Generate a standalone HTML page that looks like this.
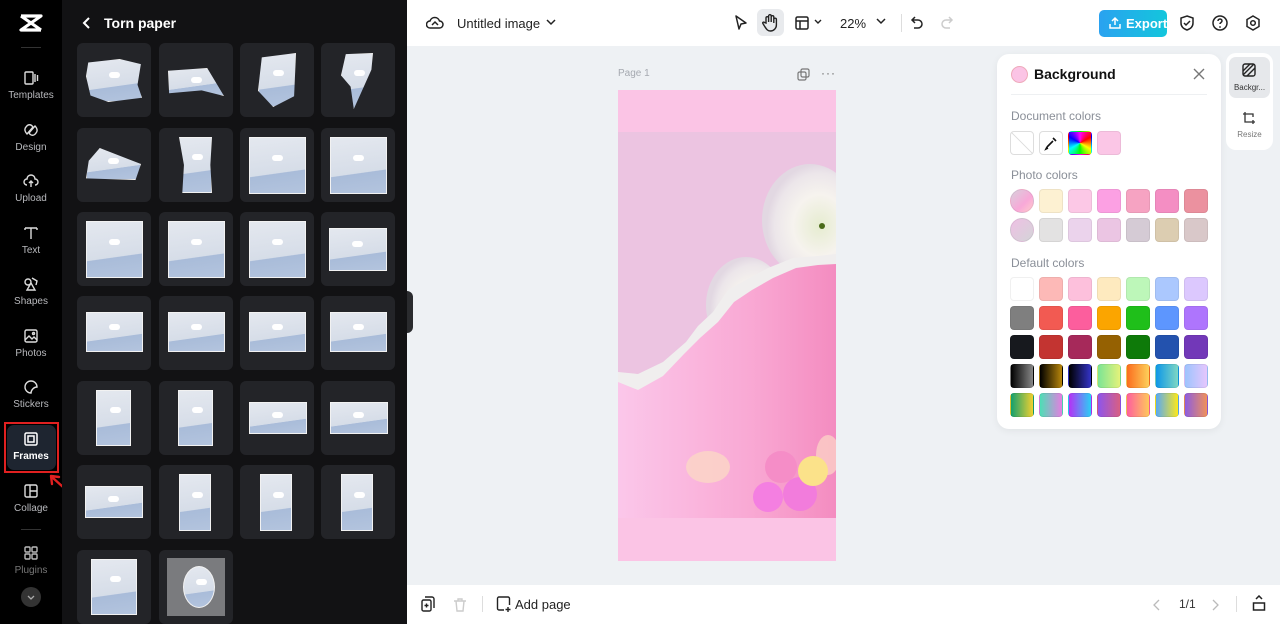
<!DOCTYPE html>
<html><head><meta charset="utf-8"><style>
*{box-sizing:border-box;margin:0;padding:0}
body{width:1280px;height:624px;overflow:hidden;position:relative;font-family:"Liberation Sans",sans-serif;background:#eef1f4}
.a{position:absolute}
#side{left:0;top:0;width:62px;height:624px;background:#000}
.si{position:absolute;left:0;width:62px;text-align:center;color:#b8b9bd;font-size:10px}
.si svg{display:block;margin:0 auto 4px}
#panel{left:62px;top:0;width:345px;height:624px;background:#121214}
.cell{position:absolute;width:74px;height:74px;background:#232428;border-radius:6px}
.im{position:absolute;background:linear-gradient(172deg,#e4e8ef 0,#d6dde8 62%,#a9bcd9 63%,#b3c4de 100%);border:1px solid #f2f2f2}
.im:after{content:"";position:absolute;left:40%;top:30%;width:11px;height:6px;background:#fff;border-radius:4px}
#top{left:407px;top:0;width:873px;height:46px;background:#fff}
#bot{left:407px;top:585px;width:873px;height:39px;background:#fff}
.sw{position:absolute;width:24px;height:24px;border-radius:4px;border:1px solid rgba(0,0,0,.06)}
.lbl{position:absolute;left:1011px;font-size:12px;color:#8a8f98}
</style></head><body>
<div id="side" class="a">
 <svg class="a" style="left:18px;top:13px" width="26" height="20" viewBox="0 0 26 20"><path d="M3 3h20L3 17h20M3 3l20 14" stroke="#fff" stroke-width="3.2" fill="none" stroke-linejoin="round"/></svg>
 <div class="a" style="left:21px;top:47px;width:20px;height:1px;background:#333"></div>
 <div class="si" style="top:70px"><svg width="16" height="16" viewBox="0 0 16 16" fill="none" stroke="#ddd" stroke-width="1.4"><rect x="2" y="2" width="8" height="12" rx="1"/><path d="M12 4v8M14.5 5v6"/></svg>Templates</div>
 <div class="si" style="top:122px"><svg width="16" height="16" viewBox="0 0 16 16" fill="none" stroke="#ddd" stroke-width="1.4"><path d="M3 5c2-3 5-3 7 0l-6 7c-2-2-3-5-1-7zM13 11c-2 3-5 3-7 0l6-7c2 2 3 5 1 7z"/></svg>Design</div>
 <div class="si" style="top:173px"><svg width="16" height="16" viewBox="0 0 16 16" fill="none" stroke="#ddd" stroke-width="1.4"><path d="M4 12a3 3 0 010-6 4 4 0 018 0 3 3 0 010 6M8 14V8M6 10l2-2 2 2"/></svg>Upload</div>
 <div class="si" style="top:225px"><svg width="16" height="16" viewBox="0 0 16 16" fill="none" stroke="#ddd" stroke-width="1.4"><path d="M2 3h12M8 3v11M2 3v2M14 3v2"/></svg>Text</div>
 <div class="si" style="top:276px"><svg width="16" height="16" viewBox="0 0 16 16" fill="none" stroke="#ddd" stroke-width="1.4"><path d="M9 2l5 3-1 4M8 7l-4 7h8z"/><circle cx="5" cy="6" r="3"/></svg>Shapes</div>
 <div class="si" style="top:328px"><svg width="16" height="16" viewBox="0 0 16 16" fill="none" stroke="#ddd" stroke-width="1.4"><rect x="2" y="2" width="12" height="12" rx="1.5"/><path d="M2 12l4-4 3 3 2-2 3 3"/><circle cx="10.5" cy="5.5" r="1"/></svg>Photos</div>
 <div class="si" style="top:379px"><svg width="16" height="16" viewBox="0 0 16 16" fill="none" stroke="#ddd" stroke-width="1.4"><path d="M14 8a6 6 0 10-6 6c0-3 3-6 6-6z"/></svg>Stickers</div>
 <div class="a" style="left:4px;top:422px;width:55px;height:51px;border:2px solid #e02020"></div>
 <div class="a" style="left:7px;top:425px;width:49px;height:45px;background:#1e2530;border-radius:7px"></div>
 <div class="si" style="top:431px;color:#fff;font-weight:bold"><svg width="16" height="16" viewBox="0 0 16 16" fill="none" stroke="#fff" stroke-width="1.5"><rect x="2" y="2" width="12" height="12" rx="1.5"/><rect x="5" y="5" width="6" height="6"/></svg>Frames</div>
 <svg class="a" style="left:48px;top:474px" width="28" height="24" viewBox="0 0 28 24"><path d="M25 22L5 4M3 2l1 8M3 2l8 1" stroke="#e02020" stroke-width="2.4" fill="none" stroke-linecap="round"/></svg>
 <div class="si" style="top:483px"><svg width="16" height="16" viewBox="0 0 16 16" fill="none" stroke="#ddd" stroke-width="1.4"><rect x="2" y="2" width="12" height="12" rx="1.5"/><path d="M7 2v12M7 8h7"/></svg>Collage</div>
 <div class="a" style="left:21px;top:529px;width:20px;height:1px;background:#333"></div>
 <div class="si" style="top:545px;color:#777"><svg width="16" height="16" viewBox="0 0 16 16" fill="none" stroke="#bbb" stroke-width="1.4"><rect x="2" y="2" width="5" height="5" rx="1"/><rect x="9" y="2" width="5" height="5" rx="1"/><rect x="2" y="9" width="5" height="5" rx="1"/><rect x="9" y="9" width="5" height="5" rx="1"/></svg>Plugins</div>
 <div class="a" style="left:21px;top:587px;width:20px;height:20px;border-radius:50%;background:#333"><svg width="20" height="20" viewBox="0 0 20 20"><path d="M7 9l3 3 3-3" stroke="#aaa" fill="none" stroke-width="1.3"/></svg></div>
</div>
<div id="panel" class="a">
 <svg class="a" style="left:19px;top:16px" width="12" height="14" viewBox="0 0 12 14"><path d="M8 2L3 7l5 5" stroke="#fff" stroke-width="2" fill="none"/></svg>
 <div class="a" style="left:42px;top:15px;color:#fff;font-size:14px;font-weight:bold">Torn paper</div>
</div>
<div id="grid">
<div class="cell" style="left:77px;top:43px"><div class="im" style="left:9px;top:16px;width:56px;height:43px;clip-path:polygon(4% 8%,60% 0,98% 12%,92% 60%,100% 90%,40% 100%,8% 85%,0 40%)"></div></div>
<div class="cell" style="left:159px;top:43px"><div class="im" style="left:9px;top:25px;width:56px;height:28px;clip-path:polygon(0 10%,70% 0,100% 100%,60% 80%,2% 90%)"></div></div>
<div class="cell" style="left:240px;top:43px"><div class="im" style="left:18px;top:10px;width:38px;height:54px;clip-path:polygon(10% 8%,100% 0,95% 80%,40% 100%,0 70%)"></div></div>
<div class="cell" style="left:321px;top:43px"><div class="im" style="left:20px;top:10px;width:32px;height:56px;clip-path:polygon(15% 2%,100% 0,95% 30%,40% 100%,30% 60%,0 40%)"></div></div>
<div class="cell" style="left:77px;top:128px"><div class="im" style="left:9px;top:20px;width:55px;height:32px;clip-path:polygon(25% 0,100% 50%,90% 100%,0 95%,5% 40%)"></div></div>
<div class="cell" style="left:159px;top:128px"><div class="im" style="left:20px;top:9px;width:33px;height:56px;clip-path:polygon(0 0,100% 0,95% 50%,100% 100%,10% 100%,15% 50%)"></div></div>
<div class="cell" style="left:240px;top:128px"><div class="im" style="left:9px;top:9px;width:57px;height:57px"></div></div>
<div class="cell" style="left:321px;top:128px"><div class="im" style="left:9px;top:9px;width:57px;height:57px"></div></div>
<div class="cell" style="left:77px;top:212px"><div class="im" style="left:9px;top:9px;width:57px;height:57px"></div></div>
<div class="cell" style="left:159px;top:212px"><div class="im" style="left:9px;top:9px;width:57px;height:57px"></div></div>
<div class="cell" style="left:240px;top:212px"><div class="im" style="left:9px;top:9px;width:57px;height:57px"></div></div>
<div class="cell" style="left:321px;top:212px"><div class="im" style="left:8px;top:16px;width:58px;height:43px"></div></div>
<div class="cell" style="left:77px;top:296px"><div class="im" style="left:9px;top:16px;width:57px;height:40px"></div></div>
<div class="cell" style="left:159px;top:296px"><div class="im" style="left:9px;top:16px;width:57px;height:40px"></div></div>
<div class="cell" style="left:240px;top:296px"><div class="im" style="left:9px;top:16px;width:57px;height:40px"></div></div>
<div class="cell" style="left:321px;top:296px"><div class="im" style="left:9px;top:16px;width:57px;height:40px"></div></div>
<div class="cell" style="left:77px;top:381px"><div class="im" style="left:19px;top:9px;width:35px;height:56px"></div></div>
<div class="cell" style="left:159px;top:381px"><div class="im" style="left:19px;top:9px;width:35px;height:56px"></div></div>
<div class="cell" style="left:240px;top:381px"><div class="im" style="left:9px;top:21px;width:58px;height:32px"></div></div>
<div class="cell" style="left:321px;top:381px"><div class="im" style="left:9px;top:21px;width:58px;height:32px"></div></div>
<div class="cell" style="left:77px;top:465px"><div class="im" style="left:8px;top:21px;width:58px;height:32px"></div></div>
<div class="cell" style="left:159px;top:465px"><div class="im" style="left:20px;top:9px;width:32px;height:57px"></div></div>
<div class="cell" style="left:240px;top:465px"><div class="im" style="left:20px;top:9px;width:32px;height:57px"></div></div>
<div class="cell" style="left:321px;top:465px"><div class="im" style="left:20px;top:9px;width:32px;height:57px"></div></div>
<div class="cell" style="left:77px;top:550px"><div class="im" style="left:14px;top:9px;width:46px;height:56px"></div></div>
<div class="cell" style="left:159px;top:550px"><div class="a" style="left:8px;top:8px;width:58px;height:58px;background:#7a7b7e"></div><div class="im" style="left:24px;top:16px;width:32px;height:42px;border-radius:50%"></div></div>
</div>
<div class="a" style="left:407px;top:291px;width:6px;height:42px;background:#2a2b2e;border-radius:0 6px 6px 0"></div>

<div id="top" class="a">
 <svg class="a" style="left:19px;top:15px" width="18" height="16" viewBox="0 0 18 16" fill="none" stroke="#222" stroke-width="1.5"><path d="M4 13a3.5 3.5 0 010-7 5 5 0 019.5 0 3.5 3.5 0 010 7zM6 10l3-3 3 3"/></svg>
 <div class="a" style="left:50px;top:16px;font-size:13px;color:#222">Untitled image</div>
 <svg class="a" style="left:138px;top:17px" width="12" height="10" viewBox="0 0 12 10"><path d="M2 3l4 4 4-4" stroke="#222" stroke-width="1.5" fill="none"/></svg>
 <svg class="a" style="left:326px;top:14px" width="16" height="18" viewBox="0 0 16 18"><path d="M3 2l10 7-5 1-2 5z" stroke="#222" stroke-width="1.5" fill="none" stroke-linejoin="round"/></svg>
 <div class="a" style="left:350px;top:9px;width:27px;height:27px;background:#e8eaed;border-radius:6px"></div>
 <svg class="a" style="left:355px;top:13px" width="17" height="19" viewBox="0 0 17 19" fill="none" stroke="#222" stroke-width="1.4"><path d="M4 10V5a1.3 1.3 0 012.6 0V9V3a1.3 1.3 0 012.6 0v6V4a1.3 1.3 0 012.6 0v6V6.5a1.3 1.3 0 012.6 0V12a6 6 0 01-6 6c-3 0-4-2-6-5l-1.5-2.5c-.6-1 .8-2 1.6-1z"/></svg>
 <svg class="a" style="left:387px;top:15px" width="16" height="16" viewBox="0 0 16 16" fill="none" stroke="#222" stroke-width="1.5"><rect x="2" y="2" width="12" height="12" rx="1.5"/><path d="M2 6h12M6 6v8"/></svg>
 <svg class="a" style="left:406px;top:18px" width="10" height="8" viewBox="0 0 10 8"><path d="M2 2l3 3 3-3" stroke="#222" stroke-width="1.4" fill="none"/></svg>
 <div class="a" style="left:433px;top:16px;font-size:13px;color:#222">22%</div>
 <svg class="a" style="left:468px;top:18px" width="12" height="8" viewBox="0 0 12 8"><path d="M2 1l4 4 4-4" stroke="#222" stroke-width="1.5" fill="none"/></svg>
 <div class="a" style="left:494px;top:14px;width:1px;height:18px;background:#ddd"></div>
 <svg class="a" style="left:503px;top:15px" width="14" height="16" viewBox="0 0 14 16"><path d="M5 2L2 5l3 3M2 5h6a4 4 0 010 8H4" stroke="#222" stroke-width="1.5" fill="none"/></svg>
 <svg class="a" style="left:533px;top:15px" width="14" height="16" viewBox="0 0 14 16"><path d="M9 2l3 3-3 3M12 5H6a4 4 0 000 8h4" stroke="#ccc" stroke-width="1.5" fill="none"/></svg>
 <div class="a" style="left:692px;top:10px;width:68px;height:27px;border-radius:5px;background:linear-gradient(90deg,#2aa2f0,#13c6dc);color:#fff;font-size:13px;font-weight:bold;padding:6px 0 0 27px">Export</div>
 <svg class="a" style="left:702px;top:16px" width="12" height="14" viewBox="0 0 12 14"><path d="M6 9V2M3 5l3-3 3 3M1 8v4h10V8" stroke="#fff" stroke-width="1.5" fill="none"/></svg>
 <svg class="a" style="left:772px;top:14px" width="16" height="18" viewBox="0 0 16 18"><path d="M8 2l6 2v5c0 4-3 6-6 7-3-1-6-3-6-7V4zM5 9l2 2 4-4" stroke="#222" stroke-width="1.5" fill="none"/></svg>
 <svg class="a" style="left:804px;top:14px" width="18" height="18" viewBox="0 0 18 18"><circle cx="9" cy="9" r="7" stroke="#222" stroke-width="1.5" fill="none"/><path d="M7 7a2 2 0 114 0c0 1.5-2 1.5-2 3" stroke="#222" stroke-width="1.5" fill="none"/><circle cx="9" cy="13" r=".9" fill="#222"/></svg>
 <svg class="a" style="left:837px;top:14px" width="18" height="18" viewBox="0 0 18 18"><path d="M9 2l6 3.5v7L9 16l-6-3.5v-7z" stroke="#222" stroke-width="1.5" fill="none"/><circle cx="9" cy="9" r="2.3" stroke="#222" stroke-width="1.5" fill="none"/></svg>
</div>

<div class="a" style="left:618px;top:68px;font-size:10px;color:#a5a9b0">Page 1</div>
<svg class="a" style="left:797px;top:68px" width="13" height="13" viewBox="0 0 13 13" fill="none" stroke="#777" stroke-width="1.2"><rect x="4" y="1" width="8" height="8" rx="1.5"/><rect x="1" y="4" width="8" height="8" rx="1.5"/></svg>
<div class="a" style="left:821px;top:66px;font-size:12px;color:#666;letter-spacing:1px">···</div>

<svg class="a" style="left:618px;top:90px" width="218" height="471" viewBox="0 0 218 471">
 <defs>
  <linearGradient id="pk" x1="0" y1="0" x2="1" y2="0"><stop offset="0" stop-color="#fbc7ea"/><stop offset=".6" stop-color="#f9a9d4"/><stop offset="1" stop-color="#f48cc0"/></linearGradient>
  <radialGradient id="fl" cx=".6" cy=".55" r=".55"><stop offset="0" stop-color="#e6ecd0"/><stop offset=".5" stop-color="#f6f3ee"/><stop offset=".85" stop-color="#ece6ea"/><stop offset="1" stop-color="#e2d8e2"/></radialGradient>
 </defs>
 <rect width="218" height="471" fill="#fbc4e5"/>
 <rect y="42" width="218" height="386" fill="#ecc4e1"/>
 <ellipse cx="192" cy="130" rx="48" ry="56" fill="url(#fl)"/>
 <ellipse cx="128" cy="215" rx="40" ry="48" fill="url(#fl)"/>
 <circle cx="204" cy="136" r="3" fill="#4a6a1a"/>
 <path d="M0 282 L20 284 L45 272 L68 252 L80 236 L95 222 L110 200 L128 190 L150 178 L175 168 L200 166 L218 164 L218 428 L0 428Z" fill="#f0eeee"/>
 <path d="M0 292 L20 300 L45 286 L66 264 L82 248 L100 232 L116 212 L134 200 L155 188 L178 178 L200 175 L218 174 L218 428 L0 428Z" fill="url(#pk)"/>
 <ellipse cx="90" cy="377" rx="22" ry="16" fill="#fbd7c5" opacity=".8"/>
 <ellipse cx="210" cy="365" rx="12" ry="20" fill="#fbd0c5" opacity=".8"/>
 <circle cx="163" cy="377" r="16" fill="#f58dc7"/>
 <circle cx="182" cy="404" r="17" fill="#f27cdc"/>
 <circle cx="150" cy="407" r="15" fill="#f47fe1"/>
 <circle cx="195" cy="381" r="15" fill="#fbe28a"/>
 <rect y="428" width="218" height="43" fill="#fbc4e5"/>
</svg>

<div class="a" style="left:997px;top:54px;width:224px;height:375px;background:#fff;border-radius:12px;box-shadow:0 2px 8px rgba(0,0,0,.06)"></div>
<div class="a" style="left:1011px;top:66px;width:17px;height:17px;border-radius:50%;background:#fbc4e5;border:1px solid #eab"></div>
<div class="a" style="left:1034px;top:66px;font-size:14px;font-weight:bold;color:#111">Background</div>
<svg class="a" style="left:1192px;top:67px" width="14" height="14" viewBox="0 0 14 14"><path d="M2 2l10 10M12 2L2 12" stroke="#777" stroke-width="1.4"/></svg>
<div class="a" style="left:1011px;top:94px;width:196px;height:1px;background:#eef0f2"></div>
<div class="lbl" style="top:109px">Document colors</div>
<div class="sw" style="left:1010px;top:131px;background:linear-gradient(45deg,#fff 48%,#ddd 49%,#ddd 51%,#fff 52%);border-color:#ddd"></div>
<div class="sw" style="left:1039px;top:131px;background:#fff;border-color:#ddd"><svg width="22" height="22" viewBox="0 0 22 22"><path d="M7 15l6-6M13 6l3 3M8 16l-2 1 1-2" stroke="#111" stroke-width="1.6" fill="none"/></svg></div>
<div class="sw" style="left:1068px;top:131px;background:conic-gradient(#f0f,#f00,#ff0,#0f0,#0ff,#00f,#f0f)"></div>
<div class="sw" style="left:1097px;top:131px;background:#fbc6e6"></div>
<div class="lbl" style="top:168px">Photo colors</div>
<div class="sw" style="left:1010px;top:189px;border-radius:50%;background:linear-gradient(135deg,#d8d0dc,#f8a8d8 60%,#fcc)"></div>
<div class="sw" style="left:1039px;top:189px;background:#fdf1d2"></div>
<div class="sw" style="left:1068px;top:189px;background:#fcc8e6"></div>
<div class="sw" style="left:1097px;top:189px;background:#fca0e3"></div>
<div class="sw" style="left:1126px;top:189px;background:#f6a3c2"></div>
<div class="sw" style="left:1155px;top:189px;background:#f48ec3"></div>
<div class="sw" style="left:1184px;top:189px;background:#eb919f"></div>
<div class="sw" style="left:1010px;top:218px;border-radius:50%;background:linear-gradient(135deg,#eec0e4,#d4d4d8)"></div>
<div class="sw" style="left:1039px;top:218px;background:#e3e2e2"></div>
<div class="sw" style="left:1068px;top:218px;background:#ebd3ec"></div>
<div class="sw" style="left:1097px;top:218px;background:#ebc5e3"></div>
<div class="sw" style="left:1126px;top:218px;background:#d5cbd5"></div>
<div class="sw" style="left:1155px;top:218px;background:#dccdb1"></div>
<div class="sw" style="left:1184px;top:218px;background:#d9c8c9"></div>
<div class="lbl" style="top:256px">Default colors</div>
<div class="sw" style="left:1010px;top:277px;background:#fff"></div>
<div class="sw" style="left:1039px;top:277px;background:#fdb9b7"></div>
<div class="sw" style="left:1068px;top:277px;background:#fdc0dc"></div>
<div class="sw" style="left:1097px;top:277px;background:#feeabf"></div>
<div class="sw" style="left:1126px;top:277px;background:#bdf7b9"></div>
<div class="sw" style="left:1155px;top:277px;background:#abc8fe"></div>
<div class="sw" style="left:1184px;top:277px;background:#dcc8fe"></div>
<div class="sw" style="left:1010px;top:306px;background:#7f7f7f"></div>
<div class="sw" style="left:1039px;top:306px;background:#f25a52"></div>
<div class="sw" style="left:1068px;top:306px;background:#fc5e9d"></div>
<div class="sw" style="left:1097px;top:306px;background:#fba500"></div>
<div class="sw" style="left:1126px;top:306px;background:#1fbf1a"></div>
<div class="sw" style="left:1155px;top:306px;background:#5d96fe"></div>
<div class="sw" style="left:1184px;top:306px;background:#ae75fd"></div>
<div class="sw" style="left:1010px;top:335px;background:#17191e"></div>
<div class="sw" style="left:1039px;top:335px;background:#c33431"></div>
<div class="sw" style="left:1068px;top:335px;background:#a6295a"></div>
<div class="sw" style="left:1097px;top:335px;background:#956102"></div>
<div class="sw" style="left:1126px;top:335px;background:#0e7a09"></div>
<div class="sw" style="left:1155px;top:335px;background:#2352ae"></div>
<div class="sw" style="left:1184px;top:335px;background:#7238b8"></div>
<div class="sw" style="left:1010px;top:364px;background:linear-gradient(90deg,#000,#888)"></div>
<div class="sw" style="left:1039px;top:364px;background:linear-gradient(90deg,#000,#b8860b)"></div>
<div class="sw" style="left:1068px;top:364px;background:linear-gradient(90deg,#000,#3434c8)"></div>
<div class="sw" style="left:1097px;top:364px;background:linear-gradient(90deg,#7be495,#e4f27a)"></div>
<div class="sw" style="left:1126px;top:364px;background:linear-gradient(90deg,#fb6d1e,#fdd05a)"></div>
<div class="sw" style="left:1155px;top:364px;background:linear-gradient(90deg,#0d97e8,#7fd7c3)"></div>
<div class="sw" style="left:1184px;top:364px;background:linear-gradient(90deg,#9dc4fd,#e6c6fd)"></div>
<div class="sw" style="left:1010px;top:393px;background:linear-gradient(90deg,#13a06e,#f0d030)"></div>
<div class="sw" style="left:1039px;top:393px;background:linear-gradient(90deg,#4ddfb5,#e47ee1)"></div>
<div class="sw" style="left:1068px;top:393px;background:linear-gradient(90deg,#b630f5,#2ad0f5)"></div>
<div class="sw" style="left:1097px;top:393px;background:linear-gradient(90deg,#8e55ec,#d95f82)"></div>
<div class="sw" style="left:1126px;top:393px;background:linear-gradient(90deg,#fe5f9e,#fec85a)"></div>
<div class="sw" style="left:1155px;top:393px;background:linear-gradient(90deg,#58a9f5,#fce81b)"></div>
<div class="sw" style="left:1184px;top:393px;background:linear-gradient(90deg,#8d5de0,#f0915a)"></div>

<div class="a" style="left:1226px;top:53px;width:47px;height:97px;background:#fff;border-radius:10px"></div>
<div class="a" style="left:1229px;top:57px;width:41px;height:41px;background:#e6e8eb;border-radius:7px"></div>
<svg class="a" style="left:1242px;top:63px" width="14" height="14" viewBox="0 0 14 14" fill="none" stroke="#222" stroke-width="1.4"><rect x="1" y="1" width="12" height="12" rx="2"/><path d="M1 8l7-7M5 13l8-8M1 12L12 1"/></svg>
<div class="a" style="left:1229px;top:83px;width:41px;text-align:center;font-size:8px;color:#333">Backgr...</div>
<svg class="a" style="left:1242px;top:111px" width="14" height="14" viewBox="0 0 14 14" fill="none" stroke="#333" stroke-width="1.3"><path d="M3 1v10h10M1 3h10v3M11 9v4"/></svg>
<div class="a" style="left:1229px;top:130px;width:41px;text-align:center;font-size:8px;color:#777">Resize</div>

<div id="bot" class="a">
 <svg class="a" style="left:14px;top:11px" width="14" height="16" viewBox="0 0 14 16" fill="none" stroke="#222" stroke-width="1.4"><rect x="1" y="4" width="9" height="11" rx="1.5"/><path d="M4 1h7a2 2 0 012 2v9M5.5 7.5v4M3.5 9.5h4"/></svg>
 <svg class="a" style="left:46px;top:12px" width="14" height="15" viewBox="0 0 14 15" fill="none" stroke="#ccc" stroke-width="1.4"><path d="M1 4h12M5 4V2h4v2M3 4l1 10h6l1-10"/></svg>
 <div class="a" style="left:75px;top:11px;width:1px;height:16px;background:#ddd"></div>
 <svg class="a" style="left:89px;top:11px" width="16" height="17" viewBox="0 0 16 17" fill="none" stroke="#222" stroke-width="1.4"><path d="M8 14H3a1.5 1.5 0 01-1.5-1.5v-10A1.5 1.5 0 013 1h9a1.5 1.5 0 011.5 1.5V9M12 11v5M9.5 13.5h5"/></svg>
 <div class="a" style="left:108px;top:12px;font-size:13px;color:#222">Add page</div>
 <svg class="a" style="left:745px;top:13px" width="10" height="14" viewBox="0 0 10 14"><path d="M7 2L2 7l5 5" stroke="#bbb" stroke-width="1.3" fill="none"/></svg>
 <div class="a" style="left:772px;top:12px;font-size:12px;color:#333">1/1</div>
 <svg class="a" style="left:803px;top:13px" width="10" height="14" viewBox="0 0 10 14"><path d="M3 2l5 5-5 5" stroke="#bbb" stroke-width="1.3" fill="none"/></svg>
 <div class="a" style="left:829px;top:11px;width:1px;height:16px;background:#ddd"></div>
 <svg class="a" style="left:845px;top:10px" width="14" height="17" viewBox="0 0 14 17" fill="none" stroke="#222" stroke-width="1.5"><path d="M4 4l3-3 3 3M1.5 8h11v7h-11z"/></svg>
</div>
</body></html>
